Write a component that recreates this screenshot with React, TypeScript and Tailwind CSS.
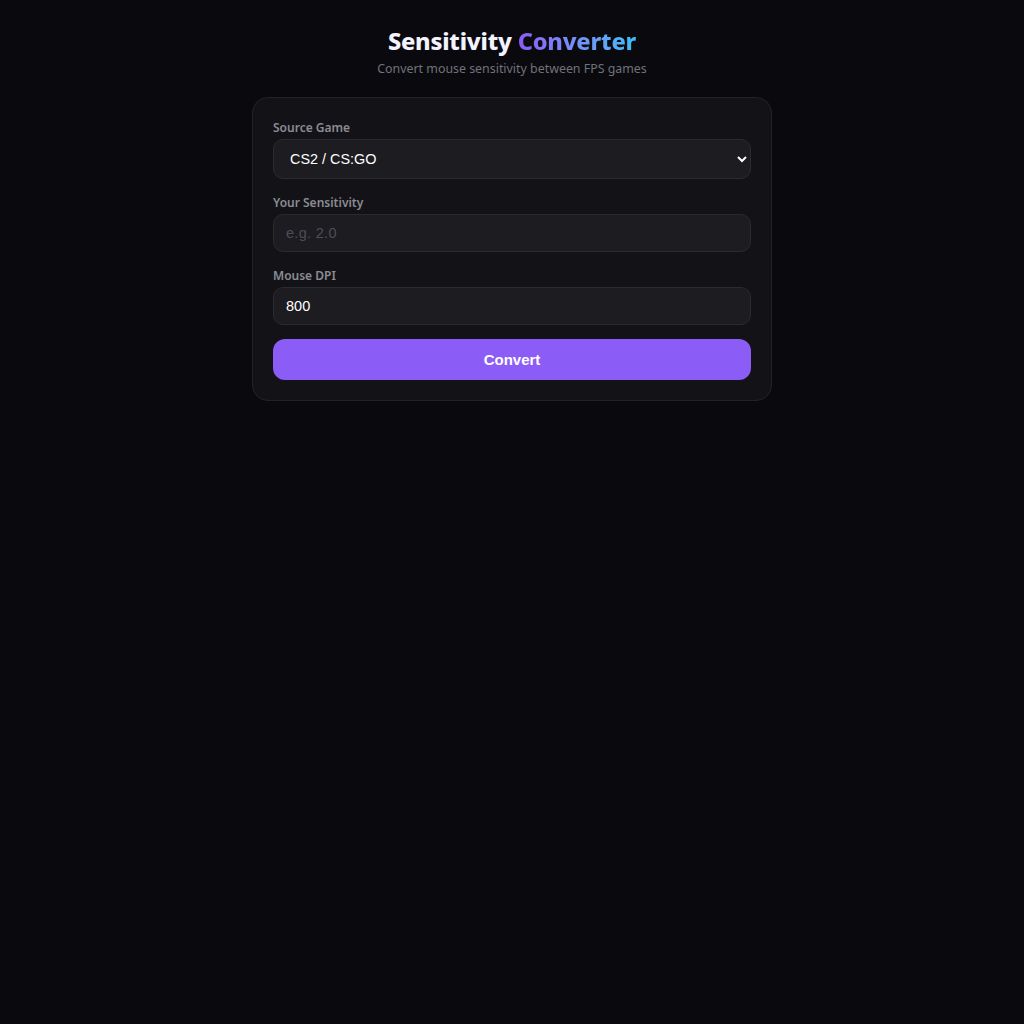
import React from "react";

export default function App() {
  return (
    <div className="min-h-screen w-full bg-[#0a0a0e] flex flex-col items-center pt-[25px]" style={{ fontFamily: '"Noto Sans", sans-serif' }}>
      <h1 className="text-[23.6px] leading-[32px] font-extrabold text-[#f4f4ff] tracking-[-0.2px]">
        Sensitivity{" "}
        <span className="bg-gradient-to-r from-[#8b5cf6] to-[#38bdf8] bg-clip-text text-transparent">Converter</span>
      </h1>
      <p className="text-[12.4px] leading-[18px] text-[#71717a] mt-[3px]">Convert mouse sensitivity between FPS games</p>
      <div className="mt-[19px] w-[520px] rounded-[16px] border border-[#222228] bg-[#131317] px-5 pt-[21px] pb-5 flex flex-col">
        <label className="text-[12px] leading-[18px] font-semibold text-[#8b8b94] mb-[2px]">Source Game</label>
        <select className="h-[40px] w-full rounded-[10px] border border-[#2a2a31] bg-[#1c1c21] px-3 text-[14.4px] text-white outline-none [color-scheme:dark]" style={{ fontFamily: '"Liberation Sans", Arial, sans-serif' }} defaultValue="cs2">
          <option value="cs2">CS2 / CS:GO</option>
          <option value="val">Valorant</option>
          <option value="apex">Apex Legends</option>
        </select>
        <label className="mt-[15px] text-[12px] leading-[18px] font-semibold text-[#8b8b94] mb-[2px]">Your Sensitivity</label>
        <input className="h-[38px] w-full rounded-[10px] border border-[#2a2a31] bg-[#1c1c21] px-3 text-[14.5px] tracking-[0.3px] text-white placeholder:text-[#4e4e57] outline-none" style={{ fontFamily: '"Liberation Sans", Arial, sans-serif' }} placeholder="e.g. 2.0" />
        <label className="mt-[15px] text-[12px] leading-[18px] font-semibold text-[#8b8b94] mb-[2px]">Mouse DPI</label>
        <input className="h-[38px] w-full rounded-[10px] border border-[#2a2a31] bg-[#1c1c21] px-3 text-[14.5px] text-white outline-none" style={{ fontFamily: '"Liberation Sans", Arial, sans-serif' }} defaultValue="800" />
        <button className="mt-[14px] h-[41px] w-full rounded-[12px] bg-[#8b5cf6] pt-[2px] text-[15px] font-bold text-white" style={{ fontFamily: '"Liberation Sans", Arial, sans-serif' }}>Convert</button>
      </div>
    </div>
  );
}
